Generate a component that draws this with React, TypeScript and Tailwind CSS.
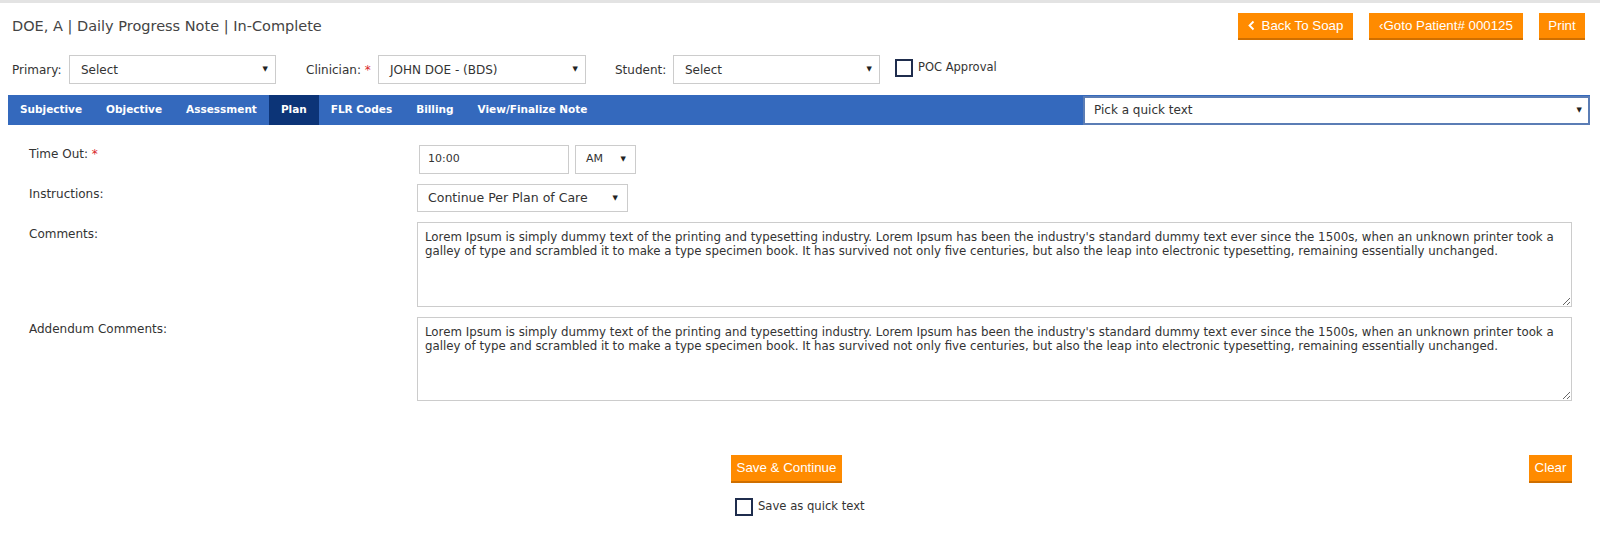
import React from "react";

const lorem =
  "Lorem Ipsum is simply dummy text of the printing and typesetting industry. Lorem Ipsum has been the industry's standard dummy text ever since the 1500s, when an unknown printer took a galley of type and scrambled it to make a type specimen book. It has survived not only five centuries, but also the leap into electronic typesetting, remaining essentially unchanged.";

const tabs = ["Subjective", "Objective", "Assessment", "Plan", "FLR Codes", "Billing", "View/Finalize Note"];

function Caret() {
  return <span className="text-[7px] text-[#222] leading-none">▼</span>;
}

function FakeSelect({ value, className }: { value: string; className: string }) {
  return (
    <div
      className={`flex items-center justify-between border border-[#ccc] bg-white text-[#333] ${className}`}
    >
      <span>{value}</span>
      <Caret />
    </div>
  );
}

function OrangeBtn({ children, className = "" }: { children: React.ReactNode; className?: string }) {
  return (
    <button
      className={`h-[27px] flex items-center justify-center bg-[#ff8b00] border-b-2 border-[#cf6f00] text-white text-[13.3px] leading-none ${className}`}
      style={{ fontFamily: '"Liberation Sans", Arial, sans-serif' }}
    >
      {children}
    </button>
  );
}

function CheckBox() {
  return <span className="inline-block w-[18px] h-[18px] border-2 border-[#1f2d4d] bg-white shrink-0" />;
}

export default function App() {
  return (
    <div
      className="w-[1600px] h-[546px] bg-white text-[#333] border-t-[3px] border-[#e3e3e3]"
      style={{ fontFamily: '"DejaVu Sans", Verdana, sans-serif' }}
    >
      {/* header */}
      <div className="flex items-start justify-between pl-[12px] pr-[15px] pt-[10px]">
        <h1 className="text-[14.5px] text-[#444] pt-[3px]">DOE, A | Daily Progress Note | In-Complete</h1>
        <div className="flex gap-[16px]">
          <OrangeBtn className="w-[115px] gap-[7px]">
            <svg width="7" height="11" viewBox="0 0 7 11" fill="none">
              <path d="M5.5 1.5 1.5 5.5l4 4" stroke="white" strokeWidth="1.8" />
            </svg>
            Back To Soap
          </OrangeBtn>
          <OrangeBtn className="w-[154px]">‹Goto Patient# 000125</OrangeBtn>
          <OrangeBtn className="w-[46px]">Print</OrangeBtn>
        </div>
      </div>

      {/* selectors */}
      <div className="flex items-center pl-[12px] mt-[15px] text-[12px] text-[#333]">
        <span className="w-[57px]">Primary:</span>
        <FakeSelect value="Select" className="w-[207px] h-[29px] pl-[11px] pr-[7px] text-[12px]" />
        <span className="ml-[30px] w-[72px]">
          Clinician: <span className="text-[#d9262c]">*</span>
        </span>
        <FakeSelect value="JOHN DOE - (BDS)" className="w-[208px] h-[29px] pl-[11px] pr-[7px] text-[12px]" />
        <span className="ml-[29px] w-[58px]">Student:</span>
        <FakeSelect value="Select" className="w-[207px] h-[29px] pl-[11px] pr-[7px] text-[12px]" />
        <span className="ml-[15px] -mt-[3px] flex items-center gap-[5px] text-[11.5px]">
          <CheckBox />
          POC Approval
        </span>
      </div>

      {/* tab bar */}
      <div className="ml-[8px] mr-[10px] mt-[11px] h-[30px] bg-[#3469bd] flex items-stretch justify-between">
        <div className="flex">
          {tabs.map((t) => (
            <div
              key={t}
              className={`flex items-center px-[12px] text-[10.5px] font-bold text-white ${
                t === "Plan" ? "bg-[#0c3477]" : ""
              }`}
            >
              {t}
            </div>
          ))}
        </div>
        <div className="w-[507px] h-[29px] my-auto bg-white border-2 border-[#5b7db5] flex items-center justify-between pl-[9px] pr-[6px] text-[12px] text-[#333]">
          <span>Pick a quick text</span>
          <Caret />
        </div>
      </div>

      {/* form */}
      <div className="pl-[29px] pr-[28px] mt-[20px] text-[12px] text-[#333] flex flex-col">
        <div className="flex">
          <div className="w-[388px]">
            Time Out: <span className="text-[#d9262c]">*</span>
          </div>
          <div className="flex gap-[6px] ml-[2px]">
            <div className="w-[150px] h-[29px] border border-[#ccc] flex items-center pl-[8px] text-[11px]">10:00</div>
            <FakeSelect value="AM" className="w-[61px] h-[29px] pl-[10px] pr-[9px] text-[11px]" />
          </div>
        </div>

        <div className="flex mt-[10px]">
          <div className="w-[388px] pt-[1px]">Instructions:</div>
          <FakeSelect value="Continue Per Plan of Care" className="w-[211px] h-[28px] pl-[10px] pr-[9px] text-[12.5px]" />
        </div>

        <div className="flex mt-[10px]">
          <div className="w-[388px] pt-[3px]">Comments:</div>
          <textarea
            className="flex-1 h-[85px] border border-[#ccc] pl-[7px] pr-[3px] pt-[7px] text-[11.8px] leading-[14px] text-[#333] outline-none"
            defaultValue={lorem}
          />
        </div>

        <div className="flex mt-[10px]">
          <div className="w-[388px] pt-[3px]">Addendum Comments:</div>
          <textarea
            className="flex-1 h-[84px] border border-[#ccc] pl-[7px] pr-[3px] pt-[7px] text-[11.8px] leading-[14px] text-[#333] outline-none"
            defaultValue={lorem}
          />
        </div>

        <div className="flex items-start mt-[54px]">
          <div className="w-[702px]" />
          <div className="flex flex-col items-start">
            <OrangeBtn className="w-[111px] h-[28px]">Save &amp; Continue</OrangeBtn>
            <span className="flex items-center gap-[5px] mt-[15px] ml-[4px] text-[11.6px]">
              <CheckBox />
              Save as quick text
            </span>
          </div>
          <div className="flex-1" />
          <OrangeBtn className="w-[43px] h-[28px]">Clear</OrangeBtn>
        </div>
      </div>
    </div>
  );
}
